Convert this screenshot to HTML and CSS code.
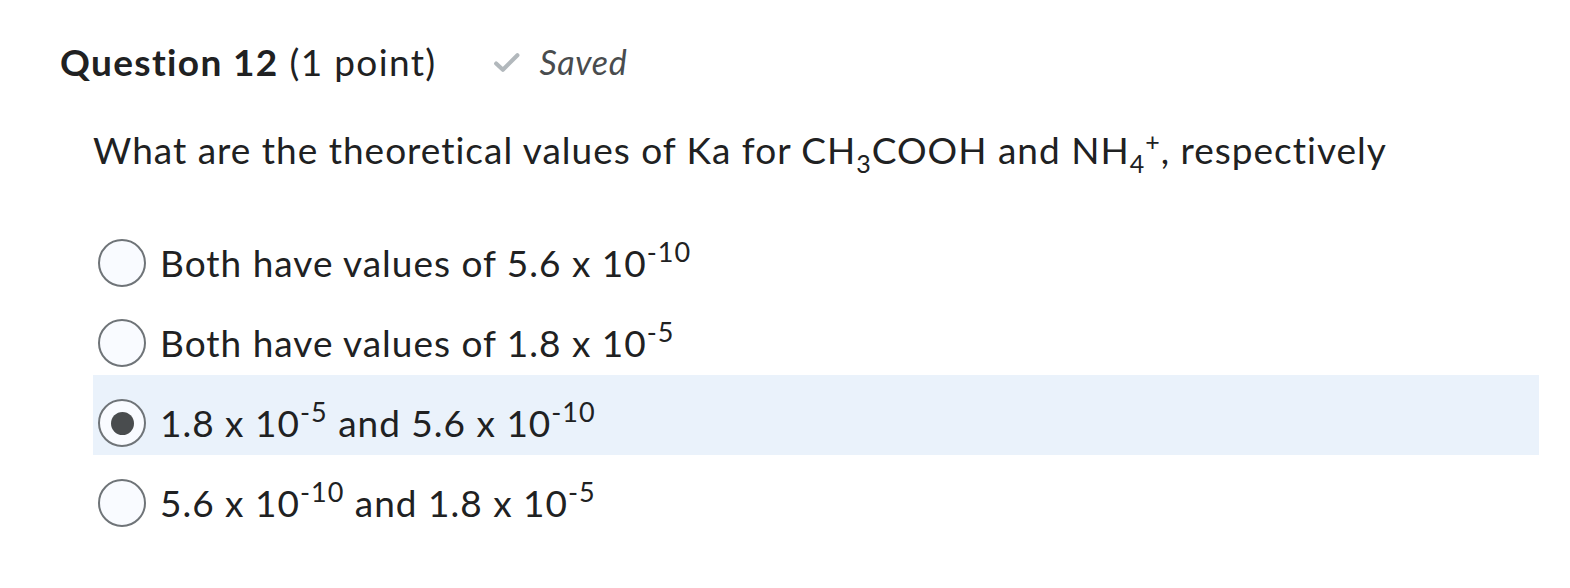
FILE: index.html
```html
<!DOCTYPE html>
<html lang="en">
<head>
<meta charset="utf-8">
<title>Question 12</title>
<link rel="stylesheet" href="styles.css">
</head>
<body>
<div class="page">
  <div class="qhead">
    <h2 class="qtitle"><span class="qnum">Question 12</span> (1 point)</h2>
    <span class="saved">
      <svg class="check" viewBox="0 0 28 22" width="29" height="23" aria-hidden="true">
        <path d="M4 12 L10.5 18 L24.5 4" fill="none" stroke="#b2b8bc" stroke-width="4" stroke-linecap="round" stroke-linejoin="round"/>
      </svg>
      <span class="saved-text">Saved</span>
    </span>
  </div>
  <div class="qtext">What are the theoretical values of Ka for CH<sub>3</sub>COOH and NH<sub>4</sub><sup>+</sup>, respectively</div>
  <ul class="options">
    <li class="opt"><span class="radio"></span><span class="label">Both have values of 5.6 x 10<sup>-10</sup></span></li>
    <li class="opt"><span class="radio"></span><span class="label">Both have values of 1.8 x 10<sup>-5</sup></span></li>
    <li class="opt selected"><span class="radio checked"></span><span class="label">1.8 x 10<sup>-5</sup> and 5.6 x 10<sup>-10</sup></span></li>
    <li class="opt"><span class="radio"></span><span class="label">5.6 x 10<sup>-10</sup> and 1.8 x 10<sup>-5</sup></span></li>
  </ul>
</div>
</body>
</html>
```
FILE: styles.css
```css
html, body {
  margin: 0;
  padding: 0;
  background: #ffffff;
}
body {
  font-family: Lato, "Noto Sans", "DejaVu Sans", sans-serif;
  color: #202122;
}
.page {
  padding: 38px 31px 0 60px;
}
.qhead {
  display: flex;
  align-items: center;
  height: 48px;
}
.qtitle {
  margin: 0 55px 0 0;
  font-size: 37px;
  font-weight: 400;
  letter-spacing: 1.35px;
  line-height: 48px;
  color: #202122;
}
.qnum {
  font-weight: 700;
}
.saved {
  display: flex;
  align-items: center;
  gap: 19px;
}
.check {
  display: block;
}
.saved-text {
  font-size: 34px;
  font-style: italic;
  letter-spacing: 0.6px;
  color: #494c4e;
  line-height: 48px;
}
.qtext {
  margin: 40px 0 0 33px;
  font-size: 37px;
  letter-spacing: 1px;
  line-height: 48px;
}
.qtext sub {
  font-size: 25px;
  line-height: 0;
  vertical-align: -9px;
}
.qtext sup {
  font-size: 25px;
  line-height: 0;
  vertical-align: 13px;
}
.options {
  list-style: none;
  margin: 41px 0 0 33px;
  padding: 0;
}
.opt {
  display: flex;
  align-items: flex-start;
  gap: 14px;
  height: 80px;
  padding: 24px 0 0 5px;
  box-sizing: border-box;
}
.opt.selected {
  background: #eaf2fb;
}
.radio {
  flex: none;
  width: 48px;
  height: 48px;
  box-sizing: border-box;
  border: 2px solid #6f7478;
  border-radius: 50%;
  background: #f9fbff;
  display: flex;
  align-items: center;
  justify-content: center;
}
.radio.checked::after {
  content: "";
  width: 23px;
  height: 23px;
  border-radius: 50%;
  background: #494c4e;
}
.label {
  font-size: 37px;
  letter-spacing: 1px;
  line-height: 48px;
}
.label sup {
  font-size: 27px;
  line-height: 0;
  vertical-align: 15px;
}
```
